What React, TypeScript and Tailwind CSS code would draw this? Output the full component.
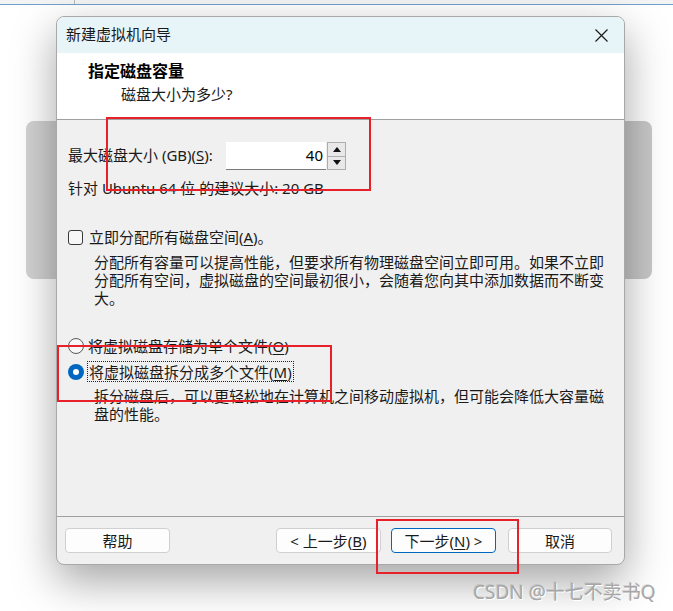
const ui = "font-['Noto_Sans','Noto_Sans_CJK_SC',sans-serif]";

function U({ children }: { children: string }) {
  return <span className="underline underline-offset-2">{children}</span>;
}

function Btn({ children, primary = false, w = "w-[105px]" }: { children: React.ReactNode; primary?: boolean; w?: string }) {
  return (
    <button
      className={`${w} h-[25px] rounded-[4px] bg-[#fdfdfd] text-[15px] leading-[18px] text-[#1a1a1a] border ${
        primary ? "border-[#0067c0]" : "border-[#d0d0d0]"
      } flex items-center justify-center`}
    >
      {children}
    </button>
  );
}

function Tri({ up }: { up?: boolean }) {
  return (
    <svg width="8" height="5" viewBox="0 0 8 5">
      <path d={up ? "M0 5 L4 0 L8 5 Z" : "M0 0 L8 0 L4 5 Z"} fill="#111" />
    </svg>
  );
}

export default function App() {
  return (
    <div className={`relative w-[673px] h-[611px] overflow-hidden bg-white ${ui}`}>
      {/* strip of the window behind */}
      <div className="h-[5px] bg-[#f4f4f4] border-b border-[#6f9fcf] flex">
        <div className="ml-[74px] w-px bg-[#b8b8b8]" />
      </div>

      {/* gray panel behind the dialog */}
      <div className="absolute left-[26px] top-[121px] w-[626px] h-[158px] rounded-[8px] bg-gradient-to-r from-[#d2d2d2] via-[#c6c6c6] to-[#c8c8c8]" />

      {/* dialog */}
      <div className="absolute left-[56px] top-[16px] w-[569px] h-[549px] flex flex-col rounded-[8px] border border-[#a8a8a8] bg-[#f0f0f0] shadow-[0_16px_44px_rgba(0,0,0,0.36)] overflow-hidden text-[15px] leading-[18px] text-[#1a1a1a]">
        <div className="h-[36px] shrink-0 flex items-center justify-between pl-[9px] pr-[16px] bg-[#e8f5f8]">
          <span className="-mt-[2px]">新建虚拟机向导</span>
          <svg width="13" height="13" viewBox="0 0 13 13">
            <path d="M0.5 0.5 L12.5 12.5 M12.5 0.5 L0.5 12.5" stroke="#1a1a1a" strokeWidth="1.2" />
          </svg>
        </div>

        <div className="h-[67px] shrink-0 bg-white border-b border-[#a0a0a0] pt-[8px]">
          <div className="pl-[31px] font-bold text-[16px] leading-[20px] text-black">指定磁盘容量</div>
          <div className="pl-[64px] mt-[3px] leading-[20px]">磁盘大小为多少?</div>
        </div>

        <div className="flex-1 flex flex-col pl-[11px] pr-[20px]">
          <div className="mt-[22px] flex items-center h-[28px]">
            <span className="w-[158px] -mt-[2px]">
              最大磁盘大小 (GB)(<U>S</U>):
            </span>
            <div className="w-[100px] h-[28px] bg-white border-b border-[#7a7a7a] flex items-center justify-end pr-[3px] pb-[2px] text-black">
              40
            </div>
            <div className="ml-[1px] w-[19px] h-[28px] border border-[#adadad] flex flex-col bg-[#f0f0f0]">
              <div className="flex-1 flex items-center justify-center border-b border-[#adadad] bg-[#e8e8e8]">
                <Tri up />
              </div>
              <div className="flex-1 flex items-center justify-center bg-[#e8e8e8]">
                <Tri />
              </div>
            </div>
          </div>

          <div className="mt-[9px]">针对 Ubuntu 64 位 的建议大小: 20 GB</div>

          <div className="mt-[31px] flex items-center gap-[6px]">
            <div className="w-[15px] h-[15px] rounded-[3px] border border-[#3a3a3a] bg-[#f7f7f7]" />
            <span>
              立即分配所有磁盘空间(<U>A</U>)。
            </span>
          </div>

          <p className="mt-[7px] pl-[26px] text-[15px] leading-[18px]">
            分配所有容量可以提高性能，但要求所有物理磁盘空间立即可用。如果不立即分配所有空间，虚拟磁盘的空间最初很小，会随着您向其中添加数据而不断变大。
          </p>

          <div className="mt-[28px] h-[21px] flex items-center gap-[3px]">
            <div className="w-[16px] h-[16px] rounded-full border border-[#5a5a5a] bg-[#f7f7f7]" />
            <span className="px-[1px]">
              将虚拟磁盘存储为单个文件(<U>O</U>)
            </span>
          </div>

          <div className="mt-[5px] h-[21px] flex items-center gap-[3px]">
            <div className="w-[16px] h-[16px] rounded-full bg-[#0067c0] flex items-center justify-center">
              <div className="w-[6px] h-[6px] rounded-full bg-white" />
            </div>
            <span className="px-[1px] h-[21px] flex items-center border border-dotted border-[#222]">
              将虚拟磁盘拆分成多个文件(<U>M</U>)
            </span>
          </div>

          <p className="mt-[5px] pl-[26px] text-[15px] leading-[18px]">
            拆分磁盘后，可以更轻松地在计算机之间移动虚拟机，但可能会降低大容量磁盘的性能。
          </p>
        </div>

        <div className="h-[48px] shrink-0 border-t border-[#a0a0a0] flex items-start pt-[11px] pl-[8px] pr-[12px]">
          <Btn>帮助</Btn>
          <div className="ml-auto flex gap-[10px]">
            <Btn>
              &lt; 上一步(<U>B</U>)
            </Btn>
            <Btn primary>
              下一步(<U>N</U>) &gt;
            </Btn>
          </div>
          <div className="ml-[12px]">
            <Btn w="w-[104px]">取消</Btn>
          </div>
        </div>
      </div>

      {/* annotation boxes */}
      <div className="absolute left-[106px] top-[117px] w-[265px] h-[74px] border-2 border-[#e8202a]" />
      <div className="absolute left-[57px] top-[345px] w-[275px] h-[57px] border-2 border-[#e8202a]" />
      <div className="absolute left-[376px] top-[519px] w-[143px] h-[55px] border-2 border-[#e8202a]" />

      {/* watermark */}
      <div className="absolute left-[473px] top-[580px] text-[19px] leading-[24px] text-[#a6a6a6] [text-shadow:1px_1px_0_#ffffff,-1px_-1px_0_#8a8a8a40]">
        CSDN @十七不卖书Q
      </div>
    </div>
  );
}
